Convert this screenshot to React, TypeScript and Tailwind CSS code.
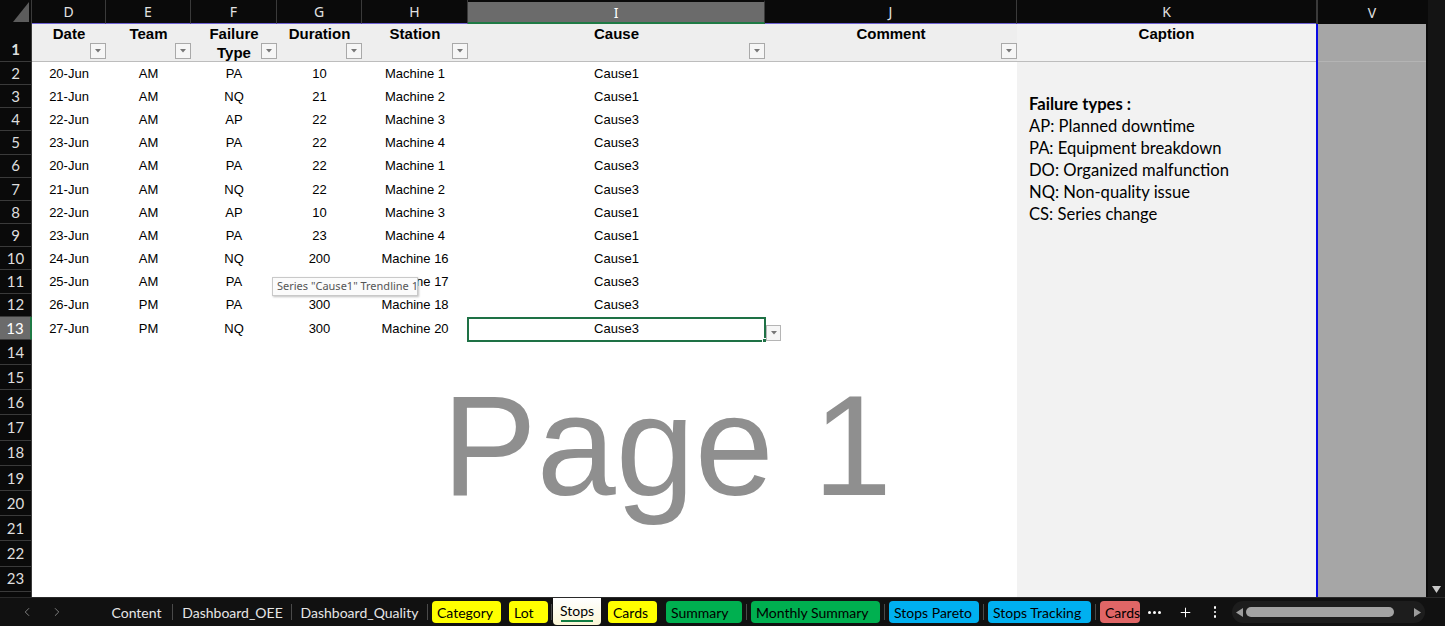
import { ChevronLeft, ChevronRight, Plus } from "lucide-react";

type Col = { key: string; w: string; title: string[] };

const COLS: Col[] = [
  { key: "D", w: "w-[74px]", title: ["Date"] },
  { key: "E", w: "w-[85px]", title: ["Team"] },
  { key: "F", w: "w-[86px]", title: ["Failure", "Type"] },
  { key: "G", w: "w-[85px]", title: ["Duration"] },
  { key: "H", w: "w-[106px]", title: ["Station"] },
  { key: "I", w: "w-[297px]", title: ["Cause"] },
  { key: "J", w: "w-[252px]", title: ["Comment"] },
];

const ROWS: string[][] = [
  ["20-Jun", "AM", "PA", "10", "Machine 1", "Cause1"],
  ["21-Jun", "AM", "NQ", "21", "Machine 2", "Cause1"],
  ["22-Jun", "AM", "AP", "22", "Machine 3", "Cause3"],
  ["23-Jun", "AM", "PA", "22", "Machine 4", "Cause3"],
  ["20-Jun", "AM", "PA", "22", "Machine 1", "Cause3"],
  ["21-Jun", "AM", "NQ", "22", "Machine 2", "Cause3"],
  ["22-Jun", "AM", "AP", "10", "Machine 3", "Cause1"],
  ["23-Jun", "AM", "PA", "23", "Machine 4", "Cause1"],
  ["24-Jun", "AM", "NQ", "200", "Machine 16", "Cause1"],
  ["25-Jun", "AM", "PA", "250", "Machine 17", "Cause3"],
  ["26-Jun", "PM", "PA", "300", "Machine 18", "Cause3"],
  ["27-Jun", "PM", "NQ", "300", "Machine 20", "Cause3"],
];

const EMPTY_ROWS = [14, 15, 16, 17, 18, 19, 20, 21, 22, 23, 24];

const CAPTION = [
  "AP: Planned downtime",
  "PA: Equipment breakdown",
  "DO: Organized malfunction",
  "NQ: Non-quality issue",
  "CS: Series change",
];

function FilterButton() {
  return (
    <div className="absolute right-0 bottom-[2px] w-[16px] h-[16px] bg-[#f6f6f6] border border-[#a9a9a9] flex items-center justify-center">
      <svg width="6" height="4" viewBox="0 0 6 4">
        <path d="M0 0h6L3 3.5z" fill="#777" />
      </svg>
    </div>
  );
}

function RowHeader({ n, active, tall }: { n: number; active?: boolean; tall?: boolean }) {
  return (
    <div
      className={`w-[32px] shrink-0 flex justify-center border-b border-r font-['Lato',sans-serif] text-[15px] ${
        tall ? "items-end pb-[1px]" : "items-center"
      } ${
        active
          ? "bg-[#6b6b6b] text-white border-b-[#3a3a3a] border-r-2 border-r-[#1f7a45]"
          : "bg-[#0a0a0a] text-[#dedede] border-[#3a3a3a]"
      }`}
    >
      {n}
    </div>
  );
}

function SideCols() {
  return (
    <>
      <div className="w-[299px] shrink-0 bg-[#f2f2f2]" />
      <div className="w-[2px] shrink-0 bg-[#0a0ae6]" />
      <div className="w-[108px] shrink-0 bg-[#a6a6a6]" />
    </>
  );
}

function Sheet() {
  return (
    <div className="relative w-[1426px] h-[597px] overflow-hidden bg-white shrink-0">
      {/* column letters */}
      <div className="flex h-[24px] bg-[#0a0a0a] font-['Noto_Sans',sans-serif] text-[14px] text-[#e2e2e2]">
        <div className="w-[32px] shrink-0 border-r border-[#3a3a3a] flex items-end justify-end pr-[2px] pb-[2px]">
          <svg width="16" height="20" viewBox="0 0 16 20">
            <path d="M16 0V20H0z" fill="#5c5c5c" />
          </svg>
        </div>
        {COLS.map((c) => (
          <div
            key={c.key}
            className={`${c.w} shrink-0 flex items-center justify-center border-r border-r-[#3a3a3a] ${
              c.key === "I"
                ? "bg-[#6b6b6b] text-white border-b-2 border-b-[#1f7a45] border-t-2 border-t-[#0a0a0a]"
                : "border-b border-b-[#6f63d4]"
            }`}
          >
            {c.key}
          </div>
        ))}
        <div className="w-[299px] shrink-0 flex items-center justify-center border-b border-b-[#6f63d4]">
          K
        </div>
        <div className="w-[2px] shrink-0 bg-[#3a3a3a]" />
        <div className="w-[108px] shrink-0 flex items-center justify-center">V</div>
      </div>

      {/* row 1: table headers */}
      <div className="flex h-[38px] font-['Liberation_Sans',Arial,sans-serif] text-[15px] font-bold text-black">
        <RowHeader n={1} tall />
        {COLS.map((c) => (
          <div
            key={c.key}
            className={`${c.w} shrink-0 relative bg-[#eeeeee] border-b border-[#bdbdbd] flex flex-col items-center leading-[19px]`}
          >
            {c.title.map((t) => (
              <span key={t}>{t}</span>
            ))}
            <FilterButton />
          </div>
        ))}
        <div className="w-[299px] shrink-0 bg-[#f2f2f2] border-b border-[#bdbdbd] flex justify-center leading-[19px]">
          Caption
        </div>
        <div className="w-[2px] shrink-0 bg-[#0a0ae6]" />
        <div className="w-[108px] shrink-0 bg-[#a6a6a6] border-b border-[#b4b4b4]" />
      </div>

      {/* data rows */}
      {ROWS.map((r, i) => (
        <div
          key={i}
          className="flex h-[23.17px] font-['Liberation_Sans',Arial,sans-serif] text-[13px] text-black"
        >
          <RowHeader n={i + 2} active={i === 11} />
          {COLS.map((c, j) => (
            <div key={c.key} className={`${c.w} shrink-0 flex items-center justify-center`}>
              {r[j] ?? ""}
            </div>
          ))}
          <SideCols />
        </div>
      ))}

      {EMPTY_ROWS.map((n) => (
        <div key={n} className="flex h-[25.2px]">
          <RowHeader n={n} />
          {COLS.map((c) => (
            <div key={c.key} className={`${c.w} shrink-0`} />
          ))}
          <SideCols />
        </div>
      ))}

      {/* caption text box */}
      <div className="absolute left-[1029px] top-[93px] font-['Lato',sans-serif] text-[16.6px] leading-[22px] text-black">
        <div className="font-bold">Failure types :</div>
        {CAPTION.map((l) => (
          <div key={l}>{l}</div>
        ))}
      </div>

      {/* page break preview watermark */}
      <div className="absolute left-[442px] top-[375px] font-['Liberation_Sans',Arial,sans-serif] text-[142px] leading-none text-[#8f8f8f] whitespace-nowrap pointer-events-none">
        Page 1
      </div>

      {/* selected cell I13 */}
      <div className="absolute left-[467px] top-[317px] w-[299px] h-[25px] border-2 border-[#1e7145]" />
      <div className="absolute left-[762px] top-[338px] w-[5px] h-[5px] bg-[#1e7145] border border-white" />
      <div className="absolute left-[766px] top-[325px] w-[15px] h-[16px] bg-[#f6f6f6] border border-[#b5b5b5] flex items-center justify-center">
        <svg width="6" height="4" viewBox="0 0 6 4">
          <path d="M0 0h6L3 3.5z" fill="#777" />
        </svg>
      </div>

      {/* tooltip */}
      <div className="absolute left-[272px] top-[277px] w-[146px] h-[19px] pl-[4px] flex items-center bg-[#fbfbfb] border border-[#c9c9c9] shadow-[1px_1px_2px_rgba(0,0,0,0.25)] font-['Noto_Sans',sans-serif] text-[11px] text-[#555] whitespace-nowrap">
        Series "Cause1" Trendline 1
      </div>
    </div>
  );
}

type Tab = {
  label: string;
  w: string;
  ml: string;
  sep?: string;
  bg?: string;
  active?: boolean;
};

const TABS: Tab[] = [
  { label: "Content", w: "w-[71px]", ml: "ml-[0px]" },
  { label: "Dashboard_OEE", w: "w-[117px]", ml: "ml-[1px]", sep: "ml-[0px]" },
  { label: "Dashboard_Quality", w: "w-[135px]", ml: "ml-[0px]", sep: "ml-[0px]" },
  { label: "Category", w: "w-[69px]", ml: "ml-[4px]", bg: "bg-[#ffff00]", sep: "ml-[0px]" },
  { label: "Lot", w: "w-[39px]", ml: "ml-[8px]", bg: "bg-[#ffff00]" },
  { label: "Stops", w: "w-[48px]", ml: "ml-[1px]", active: true, sep: "ml-[3px]" },
  { label: "Cards", w: "w-[49px]", ml: "ml-[7px]", bg: "bg-[#ffff00]" },
  { label: "Summary", w: "w-[76px]", ml: "ml-[9px]", bg: "bg-[#00b050]" },
  { label: "Monthly Summary", w: "w-[129px]", ml: "ml-[4px]", bg: "bg-[#00b050]", sep: "ml-[4px]" },
  { label: "Stops Pareto", w: "w-[90px]", ml: "ml-[4px]", bg: "bg-[#00b0f0]", sep: "ml-[4px]" },
  { label: "Stops Tracking", w: "w-[103px]", ml: "ml-[4px]", bg: "bg-[#00b0f0]", sep: "ml-[4px]" },
  { label: "Cards", w: "w-[40px]", ml: "ml-[4px]", bg: "bg-[#e06666]", sep: "ml-[4px]" },
];

function TabBar() {
  return (
    <div className="flex h-[29px] bg-[#111111] font-['Lato',sans-serif] text-[14px] text-[#e6e6e6] border-t border-[#2a2a2a]">
      <div className="w-[101px] shrink-0 flex items-center pl-[20px] gap-[16px] text-[#8c8c8c]">
        <ChevronLeft size={14} strokeWidth={1.5} />
        <ChevronRight size={14} strokeWidth={1.5} />
      </div>
      {TABS.map((t, i) => (
        <div key={i} className="flex items-stretch shrink-0">
          {t.sep && (
            <div className={`${t.sep} w-[1px] self-center h-[16px] bg-[#4a4a4a]`} />
          )}
          {t.active ? (
            <div
              className={`${t.w} ${t.ml} shrink-0 flex flex-col items-center justify-end pb-[3px] rounded-b-[4px] bg-gradient-to-b from-white to-[#fbf6d6] text-black mb-[1px]`}
            >
              <span className="leading-[16px]">{t.label}</span>
              <span className="w-[32px] h-[2px] bg-[#107c41] mt-[1px]" />
            </div>
          ) : (
            <div
              className={`${t.w} ${t.ml} shrink-0 flex items-center overflow-hidden whitespace-nowrap ${
                t.bg ? `${t.bg} text-black rounded-[4px] my-[3px] justify-start pl-[5px]` : "justify-center"
              }`}
            >
              {t.label}
            </div>
          )}
        </div>
      ))}
      <div className="ml-[2px] w-[24px] shrink-0 flex items-center justify-center gap-[2px]">
        <span className="w-[3px] h-[3px] bg-white rounded-full" />
        <span className="w-[3px] h-[3px] bg-white rounded-full" />
        <span className="w-[3px] h-[3px] bg-white rounded-full" />
      </div>
      <div className="ml-[11px] w-[16px] shrink-0 flex items-center justify-center text-white">
        <Plus size={15} strokeWidth={1.6} />
      </div>
      <div className="ml-[20px] w-[4px] shrink-0 flex flex-col items-center justify-center gap-[2px]">
        <span className="w-[2.5px] h-[2.5px] bg-white rounded-full" />
        <span className="w-[2.5px] h-[2.5px] bg-white rounded-full" />
        <span className="w-[2.5px] h-[2.5px] bg-white rounded-full" />
      </div>
      <div className="ml-[15px] w-[193px] shrink-0 my-[3px] rounded-full bg-[#1d1d1d] flex items-center px-[4px] gap-[3px]">
        <svg width="7" height="9" viewBox="0 0 7 9">
          <path d="M7 0v9L0 4.5z" fill="#9c9c9c" />
        </svg>
        <div className="w-[148px] h-[10px] rounded-full bg-[#a3a3a3]" />
        <div className="flex-1" />
        <svg width="7" height="9" viewBox="0 0 7 9">
          <path d="M0 0v9l7-4.5z" fill="#9c9c9c" />
        </svg>
      </div>
    </div>
  );
}

export default function App() {
  return (
    <div className="w-[1445px] h-[626px] bg-[#111111] flex flex-col overflow-hidden">
      <div className="flex h-[597px]">
        <Sheet />
        <div className="w-[19px] shrink-0 bg-[#141414] flex flex-col justify-end items-center pb-[4px] border-l-2 border-[#0a0a0a]">
          <svg width="9" height="7" viewBox="0 0 9 7">
            <path d="M0 0h9L4.5 7z" fill="#c8c8c8" />
          </svg>
        </div>
      </div>
      <TabBar />
    </div>
  );
}
